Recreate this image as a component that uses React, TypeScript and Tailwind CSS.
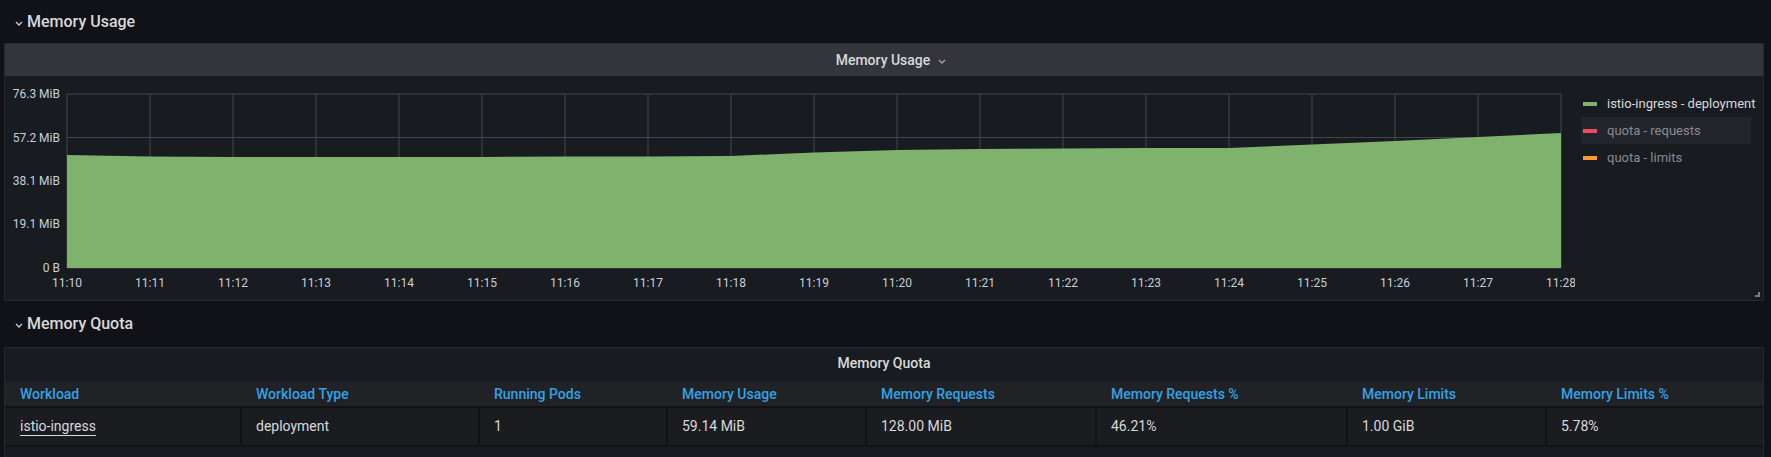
import React from 'react';

const FONT = { fontFamily: 'Roboto, "Liberation Sans", sans-serif' };

// chart geometry (svg px)
const PLOT_L = 62;
const PLOT_R = 1556;
const PLOT_T = 18;
const PLOT_B = 192;
const MAX_MIB = 76.3;

const SERIES = [
  49.55, 48.89, 48.67, 48.67, 48.67, 48.67, 48.89, 48.89, 49.11, 50.65,
  51.75, 52.18, 52.4, 52.62, 52.62, 54.16, 55.69, 57.45, 59.14,
];

const Y_TICKS = [
  { v: 76.3, label: '76.3 MiB' },
  { v: 57.2, label: '57.2 MiB' },
  { v: 38.1, label: '38.1 MiB' },
  { v: 19.1, label: '19.1 MiB' },
  { v: 0, label: '0 B' },
];

const LEGEND = [
  { label: 'istio-ingress - deployment', color: '#7eb26d', hidden: false, hover: false },
  { label: 'quota - requests', color: '#f2495c', hidden: true, hover: true },
  { label: 'quota - limits', color: '#ff9830', hidden: true, hover: false },
];

const COLUMNS = [
  'Workload',
  'Workload Type',
  'Running Pods',
  'Memory Usage',
  'Memory Requests',
  'Memory Requests %',
  'Memory Limits',
  'Memory Limits %',
];

const ROW = ['istio-ingress', 'deployment', '1', '59.14 MiB', '128.00 MiB', '46.21%', '1.00 GiB', '5.78%'];

const GRID_COLS = 'grid grid-cols-[235px_238px_188px_199px_230px_251px_199px_1fr]';

const yOf = (v: number) => PLOT_B - (v / MAX_MIB) * (PLOT_B - PLOT_T);
const xOf = (i: number) => PLOT_L + (i * (PLOT_R - PLOT_L)) / 18;

function Chevron({ className = '' }: { className?: string }) {
  return (
    <svg width="8" height="5" viewBox="0 0 8 5" className={className} aria-hidden="true">
      <path d="M1 1l3 3 3-3" fill="none" stroke="currentColor" strokeWidth="1.3" />
    </svg>
  );
}

function RowTitle({ title, height }: { title: string; height: string }) {
  return (
    <div className={`flex items-center gap-[4px] pl-[11px] text-[#d8d9da] ${height}`}>
      <Chevron className="mt-[3px] text-[#c7d0d9]" />
      <span className="text-[16px] font-medium">{title}</span>
    </div>
  );
}

function MemoryChart() {
  const area =
    `M${PLOT_L},${PLOT_B} ` +
    SERIES.map((v, i) => `L${xOf(i).toFixed(1)},${yOf(v).toFixed(1)}`).join(' ') +
    ` L${PLOT_R},${PLOT_B} Z`;

  return (
    <svg width="1570" height="224" className="shrink-0" style={FONT}>
      {/* grid */}
      {Y_TICKS.map((t) => (
        <line key={t.label} x1={PLOT_L} x2={PLOT_R} y1={yOf(t.v)} y2={yOf(t.v)} stroke="#45474c" strokeWidth="1" />
      ))}
      {SERIES.map((_, i) => (
        <line key={i} x1={xOf(i)} x2={xOf(i)} y1={PLOT_T} y2={PLOT_B} stroke="#45474c" strokeWidth="1" />
      ))}
      <path d={area} fill="#7eb26d" />
      {/* y axis */}
      {Y_TICKS.map((t) => (
        <text key={t.label} x="55" y={yOf(t.v) + 4} textAnchor="end" fontSize="12" fill="#c7d0d9">
          {t.label}
        </text>
      ))}
      {/* x axis */}
      {SERIES.map((_, i) => (
        <text key={i} x={xOf(i)} y="211" textAnchor="middle" fontSize="12" fill="#c7d0d9">
          {`11:${10 + i}`}
        </text>
      ))}
    </svg>
  );
}

export default function App() {
  return (
    <div className="min-h-screen bg-[#111217] pl-[4px] pr-[7px] text-[#d8d9da]" style={FONT}>
      <RowTitle title="Memory Usage" height="h-[43px]" />

      {/* Memory Usage graph panel */}
      <div className="relative border border-[#26282d] bg-[#181b1f]">
        <div className="flex h-[32px] items-center justify-center gap-[8px] bg-[#34353a] pl-[14px]">
          <span className="text-sm font-medium text-[#d8d9da]">Memory Usage</span>
          <Chevron className="mt-[2px] text-[#9fa7b3]" />
        </div>
        <div className="flex">
          <MemoryChart />
          <div className="flex flex-col pt-[14px]">
            {LEGEND.map((item) => (
              <div
                key={item.label}
                className={`ml-[6px] flex h-[27px] w-[170px] items-center gap-[10px] pl-[2px] text-[13px] ${
                  item.hover ? 'bg-[#22252b]' : ''
                } ${item.hidden ? 'text-[#8a8b90]' : 'text-[#d8d9da]'}`}
              >
                <span className="h-[4px] w-[14px] shrink-0" style={{ backgroundColor: item.color }} />
                <span className="whitespace-nowrap">{item.label}</span>
              </div>
            ))}
          </div>
        </div>
        <div className="absolute bottom-[3px] right-[3px] h-[5px] w-[5px] border-b-2 border-r-2 border-[#7b7d82]" />
      </div>

      <RowTitle title="Memory Quota" height="h-[46px]" />

      {/* Memory Quota table panel */}
      <div className="border border-[#26282d] bg-[#181b1f]">
        <div className="flex h-[34px] items-center justify-center pb-[4px]">
          <span className="text-sm font-medium text-[#d8d9da]">Memory Quota</span>
        </div>
        <div className={`${GRID_COLS} h-[24px] items-center bg-[#202226]`}>
          {COLUMNS.map((c, i) => (
            <div key={c} className={`text-sm font-medium text-[#33a2e5] ${i === 0 ? 'pl-[15px]' : 'pl-[16px]'}`}>
              {c}
            </div>
          ))}
        </div>
        <div className="h-[2px] bg-[#111217]" />
        <div className={`${GRID_COLS} h-[37px] bg-[#1a1c20]`}>
          {ROW.map((v, i) => (
            <div
              key={i}
              className={`flex items-center pb-[1px] text-sm text-[#d8d9da] ${
                i === 0 ? 'pl-[15px]' : 'border-l-2 border-[#111217] pl-[14px]'
              }`}
            >
              {i === 0 ? (
                <span className="underline decoration-[#d8d9da] underline-offset-[4px]">{v}</span>
              ) : (
                v
              )}
            </div>
          ))}
        </div>
        <div className="h-[2px] bg-[#111217]" />
        <div className="h-[40px]" />
      </div>
    </div>
  );
}
